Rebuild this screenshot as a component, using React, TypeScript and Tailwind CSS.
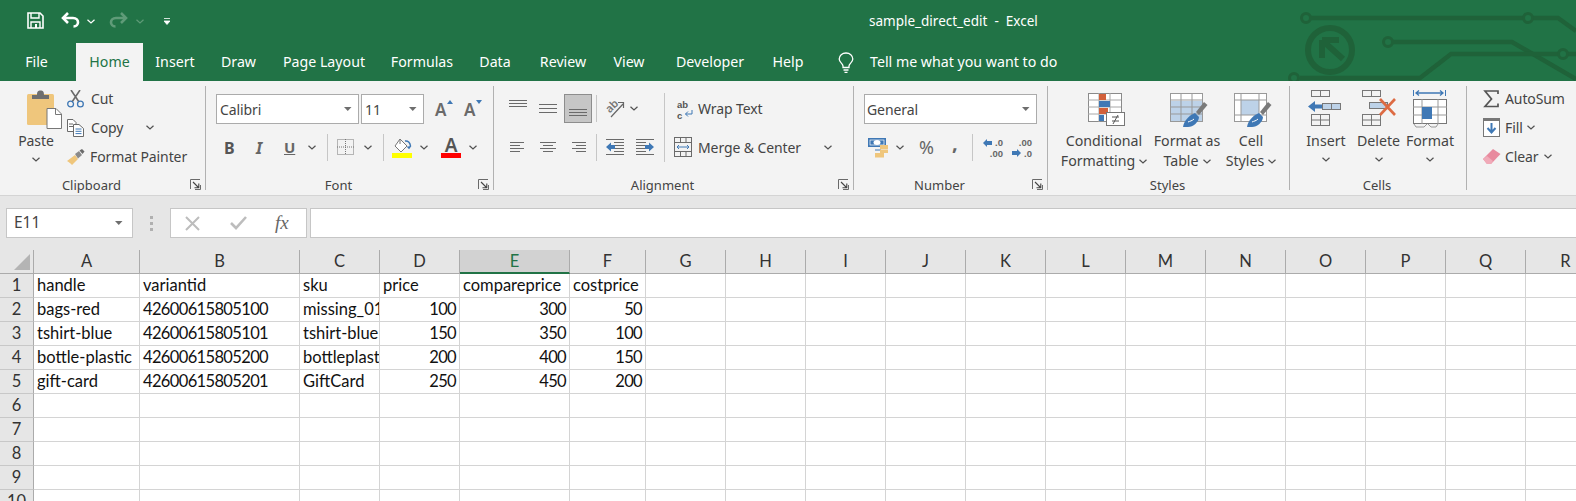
import React from "react";

const G = "#6a6a6a";
const B = "#3f78b5";

function Chev({ c = "#505050" }: { c?: string }) {
  return (
    <svg width="8" height="5" viewBox="0 0 8 5" className="shrink-0">
      <path d="M0.5 0.7L4 4L7.5 0.7" fill="none" stroke={c} strokeWidth="1.2" />
    </svg>
  );
}
function Drop() {
  return (
    <svg width="8" height="4" viewBox="0 0 8 4" className="shrink-0">
      <path d="M0 0H7.5L3.75 4Z" fill="#6e6e6e" />
    </svg>
  );
}
function Launcher() {
  return (
    <svg width="11" height="11" viewBox="0 0 11 11" className="absolute right-[4px] bottom-[5px]">
      <path d="M0.5 10V0.5H10M10.5 6V10.5H5" fill="none" stroke="#6a6a6a" />
      <path d="M3 3L8.5 8.5M8.8 4.5V8.8H4.5" fill="none" stroke="#444" strokeWidth="1.1" />
    </svg>
  );
}
function Sep({ h = "h-[27px]" }: { h?: string }) {
  return <div className={`w-px bg-[#c6c6c6] shrink-0 ${h}`} />;
}
function GroupSep() {
  return <div className="w-px my-[5px] bg-[#b1b1b1] shrink-0" />;
}
function Group({ w, label, launcher, children }: { w: string; label?: string; launcher?: boolean; children: React.ReactNode }) {
  return (
    <div className={`relative flex flex-col shrink-0 ${w}`}>
      <div className="flex-1 min-h-0">{children}</div>
      <div className={`h-[20px] leading-[21px] text-center text-[13px] tracking-normal ${launcher ? "pr-[22px]" : "pr-[2px]"}`}>{label}</div>
      {launcher && <Launcher />}
    </div>
  );
}
function Lines({ rows, w = 18, h = 12, c = G }: { rows: [number, number, number][]; w?: number; h?: number; c?: string }) {
  return (
    <svg width={w} height={h} viewBox={`0 0 ${w} ${h}`} className="shrink-0">
      {rows.map(([a, b, y], i) => (
        <path key={i} d={`M${a} ${y + 0.5}H${b}`} stroke={c} />
      ))}
    </svg>
  );
}

function Save() {
  return (
    <svg width="17" height="17" viewBox="0 0 17 17">
      <path d="M1 1H13L16 4V16H1Z" fill="none" stroke="#fff" strokeWidth="1.6" />
      <path d="M4 1V6H12V1" fill="none" stroke="#fff" strokeWidth="1.4" />
      <path d="M4 16V10H13V16" fill="none" stroke="#fff" strokeWidth="1.4" />
      <rect x="8" y="12" width="2" height="4" fill="#fff" />
    </svg>
  );
}
function Undo({ c, flip }: { c: string; flip?: boolean }) {
  return (
    <svg width="19" height="16" viewBox="0 0 19 16" className={flip ? "-scale-x-100" : ""}>
      <path d="M2 6H12C15.5 6 17 8.2 17 10.2C17 12.5 15.5 14.5 12.5 14.5" fill="none" stroke={c} strokeWidth="2.6" />
      <path d="M7 1L2 6L7 11" fill="none" stroke={c} strokeWidth="2.6" />
    </svg>
  );
}
function Watermark() {
  const c = "#1f6239";
  return (
    <svg width="290" height="81" viewBox="0 0 290 81" className="absolute right-0 top-0" fill="none" stroke={c}>
      <circle cx="20" cy="18" r="4.5" strokeWidth="3" />
      <path d="M25 18H272L290 31" strokeWidth="4.5" />
      <circle cx="242" cy="18" r="4.5" strokeWidth="3" fill="#217346" />
      <circle cx="44" cy="50" r="22" strokeWidth="6" />
      <path d="M36 40H53M36 40V58M37 41L57 59" strokeWidth="6" />
      <circle cx="102" cy="42" r="4.5" strokeWidth="3" />
      <path d="M107 42H226L290 79" strokeWidth="4.5" />
      <path d="M14 78H134L165 54H272M282 54H290" strokeWidth="4.5" />
      <circle cx="277" cy="54" r="4.5" strokeWidth="3" fill="#217346" />
      <circle cx="8" cy="78" r="4.5" strokeWidth="3" />
    </svg>
  );
}
function Bulb() {
  return (
    <svg width="16" height="21" viewBox="0 0 16 21" fill="none" stroke="#fff" strokeWidth="1.3">
      <path d="M5 14C5 11.5 1.2 10.5 1.2 7C1.2 3.4 4.2 1 8 1C11.8 1 14.8 3.4 14.8 7C14.8 10.5 11 11.5 11 14V15.5H5Z" />
      <path d="M5.5 18H10.5M6.5 20.3H9.5" />
    </svg>
  );
}
function PasteIcon() {
  return (
    <svg width="35" height="39" viewBox="0 0 35 39">
      <rect x="0" y="4" width="27" height="31" rx="1.5" fill="#efc67c" />
      <path d="M5 9V5H10C10 1.5 11 0.5 13.5 0.5C16 0.5 17 1.5 17 5H22V9Z" fill="#6f6f6f" />
      <path d="M20 18.5H29L34.5 24V38.5H20Z" fill="#fff" stroke="#777" />
      <path d="M28.5 19V24.5H34" fill="none" stroke="#777" />
    </svg>
  );
}
function Scissors() {
  return (
    <svg width="17" height="18" viewBox="0 0 17 18" fill="none">
      <path d="M4 0L12 12M13 0L5 12" stroke={G} strokeWidth="1.6" />
      <circle cx="3.6" cy="14" r="2.9" stroke={B} strokeWidth="1.3" />
      <circle cx="13.4" cy="14" r="2.9" stroke={B} strokeWidth="1.3" />
    </svg>
  );
}
function CopyIcon() {
  return (
    <svg width="17" height="18" viewBox="0 0 17 18" fill="none">
      <path d="M0.5 0.5H6L9 3.5V12.5H0.5Z" fill="#fff" stroke={G} />
      <path d="M2 5H6M2 7.5H6" stroke={G} />
      <path d="M6.5 5.5H12L16.5 9.5V17.5H6.5Z" fill="#fff" stroke={G} />
      <path d="M8.5 10H14.5M8.5 12.3H14.5M8.5 14.6H14.5" stroke={B} />
    </svg>
  );
}
function Painter() {
  return (
    <svg width="18" height="16" viewBox="0 0 18 16">
      <path d="M0 12L8 6L11 10L5 16C3.5 14 1.5 13 0 12Z" fill="#efc67c" />
      <path d="M8 5L12 2L15 6L11 9.5Z" fill="#8a8a8a" />
      <path d="M12.5 1.5L15 0L17.5 2.5L15.5 5Z" fill="#6a6a6a" />
    </svg>
  );
}
function BigA({ up }: { up?: boolean }) {
  return (
    <div className="relative w-[15px] h-[18px] shrink-0">
      <span className="absolute left-0 bottom-[-2px] text-[17px] leading-[20px] font-semibold text-[#6a6a6a]">A</span>
      <svg width="6" height="4" viewBox="0 0 6 4" className="absolute right-[-3px] top-0">
        <path d={up ? "M0 4L3 0L6 4Z" : "M0 0H6L3 4Z"} fill={B} />
      </svg>
    </div>
  );
}
function BorderIcon() {
  return (
    <svg width="18" height="17" viewBox="0 0 18 17" fill="none" stroke="#777" strokeDasharray="1 1">
      <rect x="0.5" y="0.5" width="16" height="15" />
      <path d="M8.5 0V16M0 8H17" />
    </svg>
  );
}
function FillIcon() {
  return (
    <svg width="20" height="20" viewBox="0 0 20 20">
      <path d="M8 1L15 8L9 14L3 8Z" fill="#fff" stroke="#777" />
      <path d="M8 1V6" stroke="#777" />
      <path d="M13 3C16 2.5 18 4.5 18.5 8L17 10L15.5 8.5" fill="none" stroke={B} strokeWidth="1.5" />
      <rect x="0" y="15" width="20" height="5" fill="#ffff00" />
    </svg>
  );
}
function FontColor() {
  return (
    <div className="relative w-[20px] h-[20px] shrink-0">
      <span className="absolute inset-x-0 top-[-5px] text-center text-[19px] leading-[24px] font-semibold text-[#555]">A</span>
      <div className="absolute inset-x-0 bottom-0 h-[5px] bg-[#ff0000]" />
    </div>
  );
}
function Orientation() {
  return (
    <div className="relative w-[20px] h-[20px] shrink-0">
      <span className="absolute left-[0px] top-[1px] -rotate-45 text-[11px] leading-[12px] text-[#777] font-semibold">ab</span>
      <svg width="20" height="20" viewBox="0 0 20 20" fill="none" className="absolute left-0 top-0">
        <path d="M6 18L18 5M13 3.5H18.5V9" stroke="#666" strokeWidth="1.2" />
      </svg>
    </div>
  );
}
function Indent({ rev }: { rev?: boolean }) {
  return (
    <svg width="18" height="16" viewBox="0 0 18 16" className={rev ? "-scale-x-100" : ""}>
      <path d="M0 0.5H18M8 3.5H18M8 6.5H18M8 9.5H18M8 12.5H18M0 15.5H18" stroke={G} />
      <path d="M0 8L5 3.5V6H9V10H5V12.5Z" fill={B} />
    </svg>
  );
}
function WrapIcon() {
  return (
    <div className="relative w-[16px] h-[20px] shrink-0 text-[#555] text-[9.5px] leading-[11px] font-bold font-['Liberation_Sans',sans-serif] tracking-normal">
      <div>ab</div>
      <div>c</div>
      <svg width="9" height="7" viewBox="0 0 9 7" className="absolute right-0 bottom-[2px]" fill="none" stroke={B}>
        <path d="M8 0V4H1.5M4 1.5L1.5 4L4 6.5" />
      </svg>
    </div>
  );
}
function MergeIcon() {
  return (
    <svg width="18" height="20" viewBox="0 0 18 20" fill="none">
      <rect x="0.5" y="0.5" width="17" height="19" stroke={G} />
      <path d="M0 5.5H18M0 14.5H18M6.5 0V5M12 5V0M6.5 15V20M12 15V20" stroke={G} />
      <path d="M3 10H15M5 8L3 10L5 12M13 8L15 10L13 12" stroke={B} />
    </svg>
  );
}
function Accounting() {
  return (
    <svg width="21" height="20" viewBox="0 0 21 20">
      <rect x="0" y="0" width="18" height="9" fill={B} />
      <ellipse cx="9" cy="4.5" rx="3.5" ry="2.5" fill="#fff" />
      <rect x="2" y="2" width="14" height="5" fill="none" stroke="#fff" strokeWidth="0.7" />
      <path d="M7 12H13" stroke={B} />
      <path d="M12 7H20V11H12ZM12 11.5H20V15H12ZM7 15H16V19.5H7Z" fill="#efc67c" />
    </svg>
  );
}
function DecIcon({ inc }: { inc?: boolean }) {
  return (
    <div className="relative w-[20px] h-[22px] shrink-0 text-[9.5px] leading-[11px] font-bold font-['Liberation_Sans',sans-serif] text-[#666] text-right tracking-normal">
      <div>{inc ? ".0" : ".00"}</div>
      <div>{inc ? ".00" : ".0"}</div>
      <svg width="9" height="8" viewBox="0 0 9 8" className={`absolute ${inc ? "left-0 top-[2px]" : "left-0 bottom-[2px]"}`}>
        <path d={inc ? "M0 4L4 0V2H9V6H4V8Z" : "M9 4L5 0V2H0V6H5V8Z"} fill={B} />
      </svg>
    </div>
  );
}
function CondIcon() {
  return (
    <svg width="37" height="33" viewBox="0 0 37 33" fill="none">
      <rect x="0.5" y="0.5" width="33" height="28" fill="#fff" stroke="#8a8a8a" />
      <path d="M11 0V29M22 0V29M0 7H33M0 14H33M0 21H33" stroke="#a8a8a8" />
      <rect x="11" y="1" width="7" height="6" fill="#d2603a" />
      <rect x="11" y="8" width="11" height="6" fill={B} />
      <rect x="11" y="15" width="9" height="6" fill="#d2603a" />
      <rect x="11" y="22" width="5" height="6" fill={B} />
      <rect x="18.5" y="19.5" width="18" height="13" fill="#fff" stroke="#777" />
      <path d="M24 24H31M24 28H31M30 22L25 31" stroke="#555" />
    </svg>
  );
}
function TableIcon({ cell }: { cell?: boolean }) {
  return (
    <svg width="38" height="36" viewBox="0 0 38 36" fill="none">
      <rect x="0.5" y="0.5" width="32" height="28" fill="#fff" stroke="#999" />
      {cell ? (
        <>
          <rect x="7" y="7" width="18" height="15" fill="#bdd2e8" />
          <path d="M7 0V29M25 0V29M0 7H33M0 22H33" stroke="#999" />
        </>
      ) : (
        <>
          <rect x="1" y="8" width="31" height="20" fill="#bdd2e8" />
          <path d="M11 0V29M22 0V29M0 7H33M0 14H33M0 21H33" stroke="#999" />
        </>
      )}
      <path d="M26 19L34 9L37.5 12L29 22Z" fill="#7a7a7a" />
      <path d="M13 34C14 28 18 23 25 20L29 24C29 29 23 34 18 34Z" fill={B} />
      <path d="M18 29C20 28 22 28 24 26" stroke="#fff" />
    </svg>
  );
}
function InsertIcon() {
  return (
    <svg width="36" height="36" viewBox="0 0 36 36" fill="none" stroke="#777">
      <rect x="3.5" y="0.5" width="18" height="6" />
      <path d="M12.5 0V7" />
      <rect x="14.5" y="13.5" width="18" height="6" fill="#bdd2e8" />
      <path d="M23.5 13V20" />
      <rect x="3.5" y="24.5" width="18" height="11" />
      <path d="M12.5 24V36M3 30H22" />
      <path d="M0 16.5L7 11V14.5H14V18.5H7V22Z" fill={B} stroke="none" />
    </svg>
  );
}
function DeleteIcon() {
  return (
    <svg width="36" height="36" viewBox="0 0 36 36" fill="none" stroke="#777">
      <rect x="1.5" y="0.5" width="18" height="6" />
      <path d="M10.5 0V7" />
      <rect x="8.5" y="12.5" width="18" height="6" fill="#bdd2e8" />
      <rect x="1.5" y="24.5" width="18" height="11" />
      <path d="M10.5 24V36M1 30H20" />
      <path d="M19 9L34 25M34 9L19 25" stroke="#dd6b43" strokeWidth="2.6" />
    </svg>
  );
}
function FormatIcon() {
  return (
    <svg width="36" height="38" viewBox="0 0 36 38" fill="none" stroke="#777">
      <path d="M1.5 0V6M33.5 0V6" stroke={B} />
      <path d="M4 3H31M7 0.5L4 3L7 5.5M28 0.5L31 3L28 5.5" stroke={B} strokeWidth="1.3" />
      <rect x="1.5" y="9.5" width="33" height="24" fill="#fff" />
      <path d="M10 9V34M26 9V34M1 17H35M1 25H35" stroke="#999" />
      <rect x="10" y="17" width="10" height="12" fill={B} stroke="none" />
      <path d="M2 34L4 37H12L15 34M16 34L19 37H24L26 34" stroke="#999" />
    </svg>
  );
}
function Sigma() {
  return (
    <svg width="16" height="18" viewBox="0 0 16 18" fill="none">
      <path d="M15 4V1H2L8.5 9L2 16.5H15V13.5" stroke="#555" strokeWidth="1.7" />
    </svg>
  );
}
function FillDown() {
  return (
    <svg width="17" height="19" viewBox="0 0 17 19" fill="none">
      <rect x="0.5" y="0.5" width="16" height="18" fill="#fff" stroke="#777" />
      <rect x="0" y="0" width="17" height="3" fill="#777" />
      <path d="M8.5 5V14M4.5 10L8.5 14.5L12.5 10" stroke={B} strokeWidth="2" />
    </svg>
  );
}
function Eraser() {
  return (
    <svg width="18" height="17" viewBox="0 0 18 17">
      <path d="M0 11L10 1L17.5 6L8 16H4Z" fill="#e88a9e" />
      <path d="M0 11L4 8L10 13L8 16H4Z" fill="#f0aab8" />
    </svg>
  );
}

const COLS = ["A", "B", "C", "D", "E", "F", "G", "H", "I", "J", "K", "L", "M", "N", "O", "P", "Q", "R"];
const DATA: (string | number)[][] = [
  ["handle", "variantid", "sku", "price", "compareprice", "costprice"],
  ["bags-red", "42600615805100", "missing_01", 100, 300, 50],
  ["tshirt-blue", "42600615805101", "tshirt-blue", 150, 350, 100],
  ["bottle-plastic", "42600615805200", "bottleplastic", 200, 400, 150],
  ["gift-card", "42600615805201", "GiftCard", 250, 450, 200],
];
const GRID = "grid grid-cols-[34px_106px_160px_80px_80px_110px_76px_repeat(12,80px)] auto-rows-[24px]";

export default function App() {
  return (
    <div className="w-[1576px] h-[501px] overflow-hidden bg-white flex flex-col font-['Noto_Sans',sans-serif] text-[#444]">
      <div className="relative h-[81px] bg-[#217346] shrink-0 text-white">
        <Watermark />
        <div className="relative h-[43px] flex items-center">
          <div className="ml-[27px] mt-[-3px]"><Save /></div>
          <div className="ml-[17px] mt-[-3px]"><Undo c="#fff" /></div>
          <div className="ml-[7px]"><Chev c="#fff" /></div>
          <div className="ml-[14px] mt-[-3px]"><Undo c="#5f9b78" flip /></div>
          <div className="ml-[8px]"><Chev c="#5f9b78" /></div>
          <svg width="6" height="7" viewBox="0 0 6 7" className="ml-[20px]"><path d="M0 0.5H6M0 3H6L3 6.5Z" stroke="#fff" strokeWidth="0.8" fill="#fff" /></svg>
          <div className="absolute left-[869px] text-[13.5px] whitespace-pre">sample_direct_edit  -  Excel</div>
        </div>
        <div className="relative flex h-[38px] items-center text-[14.2px] text-center">
          <div className="w-[73px]">File</div>
          <div className="ml-[3px] w-[67px] h-full leading-[38px] bg-[#f3f3f3] text-[#217346]">Home</div>
          <div className="w-[64px]">Insert</div>
          <div className="w-[63px]">Draw</div>
          <div className="w-[108px]">Page Layout</div>
          <div className="w-[88px]">Formulas</div>
          <div className="w-[58px]">Data</div>
          <div className="w-[78px]">Review</div>
          <div className="w-[54px]">View</div>
          <div className="w-[108px]">Developer</div>
          <div className="w-[48px]">Help</div>
          <div className="ml-[26px]"><Bulb /></div>
          <div className="ml-[16px]">Tell me what you want to do</div>
        </div>
      </div>

      <div className="h-[114px] bg-[#f3f3f3] flex shrink-0 text-[14px] tracking-[-0.1px]">
        <Group w="w-[205px]" label="Clipboard" launcher>
          <div className="flex">
            <div className="ml-[14px] w-[44px] flex flex-col items-center pt-[9px]">
              <div className="ml-[16px]"><PasteIcon /></div>
              <div className="mt-[2px] leading-[20px]">Paste</div>
              <div className="mt-[6px]"><Chev /></div>
            </div>
            <div className="ml-[9px] flex flex-col pt-[3px]">
              <div className="h-[29px] flex items-center gap-[6px]"><Scissors /><span className="ml-[1px]">Cut</span></div>
              <div className="h-[29px] flex items-center gap-[6px]"><CopyIcon /><span className="ml-[1px]">Copy</span><div className="ml-[17px]"><Chev /></div></div>
              <div className="h-[29px] flex items-center gap-[5px]"><Painter /><span>Format Painter</span></div>
            </div>
          </div>
        </Group>
        <GroupSep />
        <Group w="w-[287px]" label="Font" launcher>
          <div className="flex pt-[13px] pl-[10px] items-center">
            <div className="w-[143px] h-[30px] bg-white border border-[#ababab] flex items-center justify-between pl-[3px] pr-[6px]"><span>Calibri</span><Drop /></div>
            <div className="ml-[2px] w-[63px] h-[30px] bg-white border border-[#ababab] flex items-center justify-between pl-[3px] pr-[6px]"><span>11</span><Drop /></div>
            <div className="ml-[11px]"><BigA up /></div>
            <div className="ml-[14px]"><BigA /></div>
          </div>
          <div className="flex pl-[18px] mt-[9px] h-[29px] items-center">
            <span className="w-[10px] font-bold text-[16px] text-[#555]">B</span>
            <span className="ml-[22px] w-[9px] italic font-bold text-[16px] text-[#666]">I</span>
            <span className="ml-[19px] w-[12px] font-bold text-[15px] text-[#666] underline">U</span>
            <div className="ml-[12px]"><Chev /></div>
            <div className="ml-[11px]"><Sep /></div>
            <div className="ml-[9px]"><BorderIcon /></div>
            <div className="ml-[9px]"><Chev /></div>
            <div className="ml-[11px]"><Sep /></div>
            <div className="ml-[8px]"><FillIcon /></div>
            <div className="ml-[8px]"><Chev /></div>
            <div className="ml-[13px]"><FontColor /></div>
            <div className="ml-[8px]"><Chev /></div>
          </div>
        </Group>
        <GroupSep />
        <Group w="w-[359px]" label="Alignment" launcher>
          <div className="flex">
            <div className="w-[170px] pt-[13px]">
              <div className="flex items-center h-[29px]">
                <div className="ml-[15px] mb-[10px]"><Lines rows={[[0, 18, 0], [0, 18, 3], [0, 18, 6]]} h={8} /></div>
                <div className="ml-[12px]"><Lines rows={[[0, 18, 1], [0, 18, 5], [0, 18, 9]]} /></div>
                <div className="ml-[7px] w-[28px] h-[29px] bg-[#c6c6c6] border border-[#8d8d8d] flex items-end justify-center pb-[5px]">
                  <Lines rows={[[0, 18, 0], [0, 18, 3], [0, 18, 6]]} h={8} />
                </div>
                <div className="ml-[4px]"><Sep /></div>
                <div className="ml-[8px]"><Orientation /></div>
                <div className="ml-[5px]"><Chev /></div>
              </div>
              <div className="flex items-center h-[22px] mt-[13px]">
                <div className="ml-[16px]"><Lines w={16} rows={[[0, 14, 1], [0, 10, 4], [0, 14, 7], [0, 10, 10]]} /></div>
                <div className="ml-[14px]"><Lines w={16} rows={[[0, 16, 1], [3, 13, 4], [0, 16, 7], [3, 13, 10]]} /></div>
                <div className="ml-[14px]"><Lines w={16} rows={[[2, 16, 1], [6, 16, 4], [2, 16, 7], [6, 16, 10]]} /></div>
                <div className="ml-[10px]"><Sep /></div>
                <div className="ml-[9px]"><Indent /></div>
                <div className="ml-[12px]"><Indent rev /></div>
              </div>
            </div>
            <div className="mt-[12px]"><Sep h="h-[69px]" /></div>
            <div className="flex flex-col pt-[13px]">
              <div className="h-[29px] flex items-center ml-[12px]"><WrapIcon /><span className="ml-[5px]">Wrap Text</span></div>
              <div className="h-[22px] mt-[13px] flex items-center ml-[9px]"><MergeIcon /><span className="ml-[6px] w-[126px] whitespace-nowrap">Merge &amp; Center</span><Chev /></div>
            </div>
          </div>
        </Group>
        <GroupSep />
        <Group w="w-[193px]" label="Number" launcher>
          <div className="ml-[10px] mt-[13px] w-[173px] h-[30px] bg-white border border-[#ababab] flex items-center justify-between pl-[2px] pr-[6px]"><span>General</span><Drop /></div>
          <div className="flex items-center mt-[9px] h-[29px] ml-[14px]">
            <Accounting />
            <div className="ml-[7px]"><Chev /></div>
            <span className="ml-[15px] w-[16px] text-[18px] text-[#666]">%</span>
            <span className="ml-[17px] w-[6px] mt-[-9px] text-[20px] font-bold text-[#666] leading-[20px]">,</span>
            <div className="ml-[14px]"><Sep /></div>
            <div className="ml-[10px]"><DecIcon inc /></div>
            <div className="ml-[9px]"><DecIcon /></div>
          </div>
        </Group>
        <GroupSep />
        <Group w="w-[241px]" label="Styles">
          <div className="flex pl-[8px] pt-[12px] text-center leading-[20px] text-[14.2px] tracking-normal">
            <div className="w-[96px] flex flex-col items-center">
              <div className="h-[36px] ml-[4px]"><CondIcon /></div>
              <div className="mt-[2px] whitespace-nowrap">Conditional</div>
              <div className="flex items-center gap-[4px]">Formatting <Chev /></div>
            </div>
            <div className="w-[70px] flex flex-col items-center">
              <div className="h-[36px] ml-[4px]"><TableIcon /></div>
              <div className="mt-[2px] whitespace-nowrap">Format as</div>
              <div className="flex items-center gap-[4px]">Table <Chev /></div>
            </div>
            <div className="w-[58px] flex flex-col items-center">
              <div className="h-[36px] ml-[4px]"><TableIcon cell /></div>
              <div className="mt-[2px]">Cell</div>
              <div className="flex items-center gap-[4px]">Styles <Chev /></div>
            </div>
          </div>
        </Group>
        <GroupSep />
        <Group w="w-[176px]" label="Cells">
          <div className="flex pl-[9px] pt-[9px] text-center text-[14.2px] leading-[20px] tracking-normal">
            <div className="w-[54px] flex flex-col items-center">
              <div className="h-[38px]"><InsertIcon /></div>
              <div className="mt-[3px]">Insert</div>
              <div className="mt-[6px]"><Chev /></div>
            </div>
            <div className="w-[51px] flex flex-col items-center">
              <div className="h-[38px]"><DeleteIcon /></div>
              <div className="mt-[3px]">Delete</div>
              <div className="mt-[6px]"><Chev /></div>
            </div>
            <div className="w-[52px] flex flex-col items-center">
              <div className="h-[38px]"><FormatIcon /></div>
              <div className="mt-[3px]">Format</div>
              <div className="mt-[6px]"><Chev /></div>
            </div>
          </div>
        </Group>
        <GroupSep />
        <Group w="w-[109px]">
          <div className="flex flex-col pt-[3px] pl-[16px]">
            <div className="h-[29px] flex items-center"><div className="w-[22px]"><Sigma /></div>AutoSum</div>
            <div className="h-[29px] flex items-center"><div className="w-[22px]"><FillDown /></div>Fill<div className="ml-[4px]"><Chev /></div></div>
            <div className="h-[29px] flex items-center"><div className="w-[22px]"><Eraser /></div>Clear<div className="ml-[5px]"><Chev /></div></div>
          </div>
        </Group>
      </div>

      <div className="h-[55px] shrink-0 bg-[#e6e6e6] border-t border-[#d4d4d4] pt-[12px]">
        <div className="flex items-stretch h-[30px]">
          <div className="ml-[6px] w-[127px] bg-white border border-[#c6c6c6] flex items-center justify-between pl-[7px] pr-[9px] text-[15.5px]">E11<Drop /></div>
          <div className="ml-[17px] w-[3px] flex flex-col justify-center gap-[3px]">
            <div className="h-[3px] bg-[#b0b0b0]" /><div className="h-[3px] bg-[#b0b0b0]" /><div className="h-[3px] bg-[#b0b0b0]" />
          </div>
          <div className="ml-[17px] w-[137px] bg-white border border-[#c6c6c6] flex items-center">
            <svg width="15" height="15" viewBox="0 0 15 15" className="ml-[14px]"><path d="M1 1L14 14M14 1L1 14" stroke="#bdbdbd" strokeWidth="2" /></svg>
            <svg width="17" height="14" viewBox="0 0 17 14" className="ml-[30px]"><path d="M1 7L6 12L16 1" fill="none" stroke="#bdbdbd" strokeWidth="2.6" /></svg>
            <span className="ml-[28px] font-['Liberation_Serif',serif] italic text-[19px] text-[#666]">fx</span>
          </div>
          <div className="ml-[3px] flex-1 bg-white border-y border-l border-[#c6c6c6]" />
        </div>
      </div>

      <div className="flex-1 min-h-0 overflow-hidden bg-white font-['Lato',sans-serif] text-[16.5px]">
        <div className={GRID}>
          <div className="relative bg-[#e6e6e6] border-r border-b border-[#ababab]">
            <svg width="16" height="16" viewBox="0 0 16 16" className="absolute left-[14px] top-[4px]"><path d="M16 0V16H0Z" fill="#b4b4b4" /></svg>
          </div>
          {COLS.map((c) => (
            <div
              key={c}
              className={`flex items-center justify-center border-r ${c === "E" ? "bg-[#d2d2d2] text-[#217346] border-b-2 border-b-[#217346] border-r-[#ababab]" : "bg-[#e6e6e6] text-[#333] border-b border-[#ababab]"}`}
            >
              {c}
            </div>
          ))}
          {Array.from({ length: 10 }).map((_, r) => (
            <React.Fragment key={r}>
              <div className="flex items-center justify-center bg-[#e6e6e6] border-r border-r-[#ababab] border-b border-b-[#c8c8c8] text-[#333]">{r + 1}</div>
              {COLS.map((c, i) => {
                const v = DATA[r]?.[i];
                const digits = typeof v === "number" || (typeof v === "string" && /^\d+$/.test(v));
                return (
                  <div
                    key={c}
                    className={`border-r border-b border-[#d4d4d4] overflow-hidden whitespace-nowrap leading-[23px] text-[#111] ${digits ? "tracking-[-0.64px]" : ""} ${typeof v === "number" ? "text-right pr-[3px]" : "text-left pl-[3px]"}`}
                  >
                    {v}
                  </div>
                );
              })}
            </React.Fragment>
          ))}
        </div>
      </div>
    </div>
  );
}
